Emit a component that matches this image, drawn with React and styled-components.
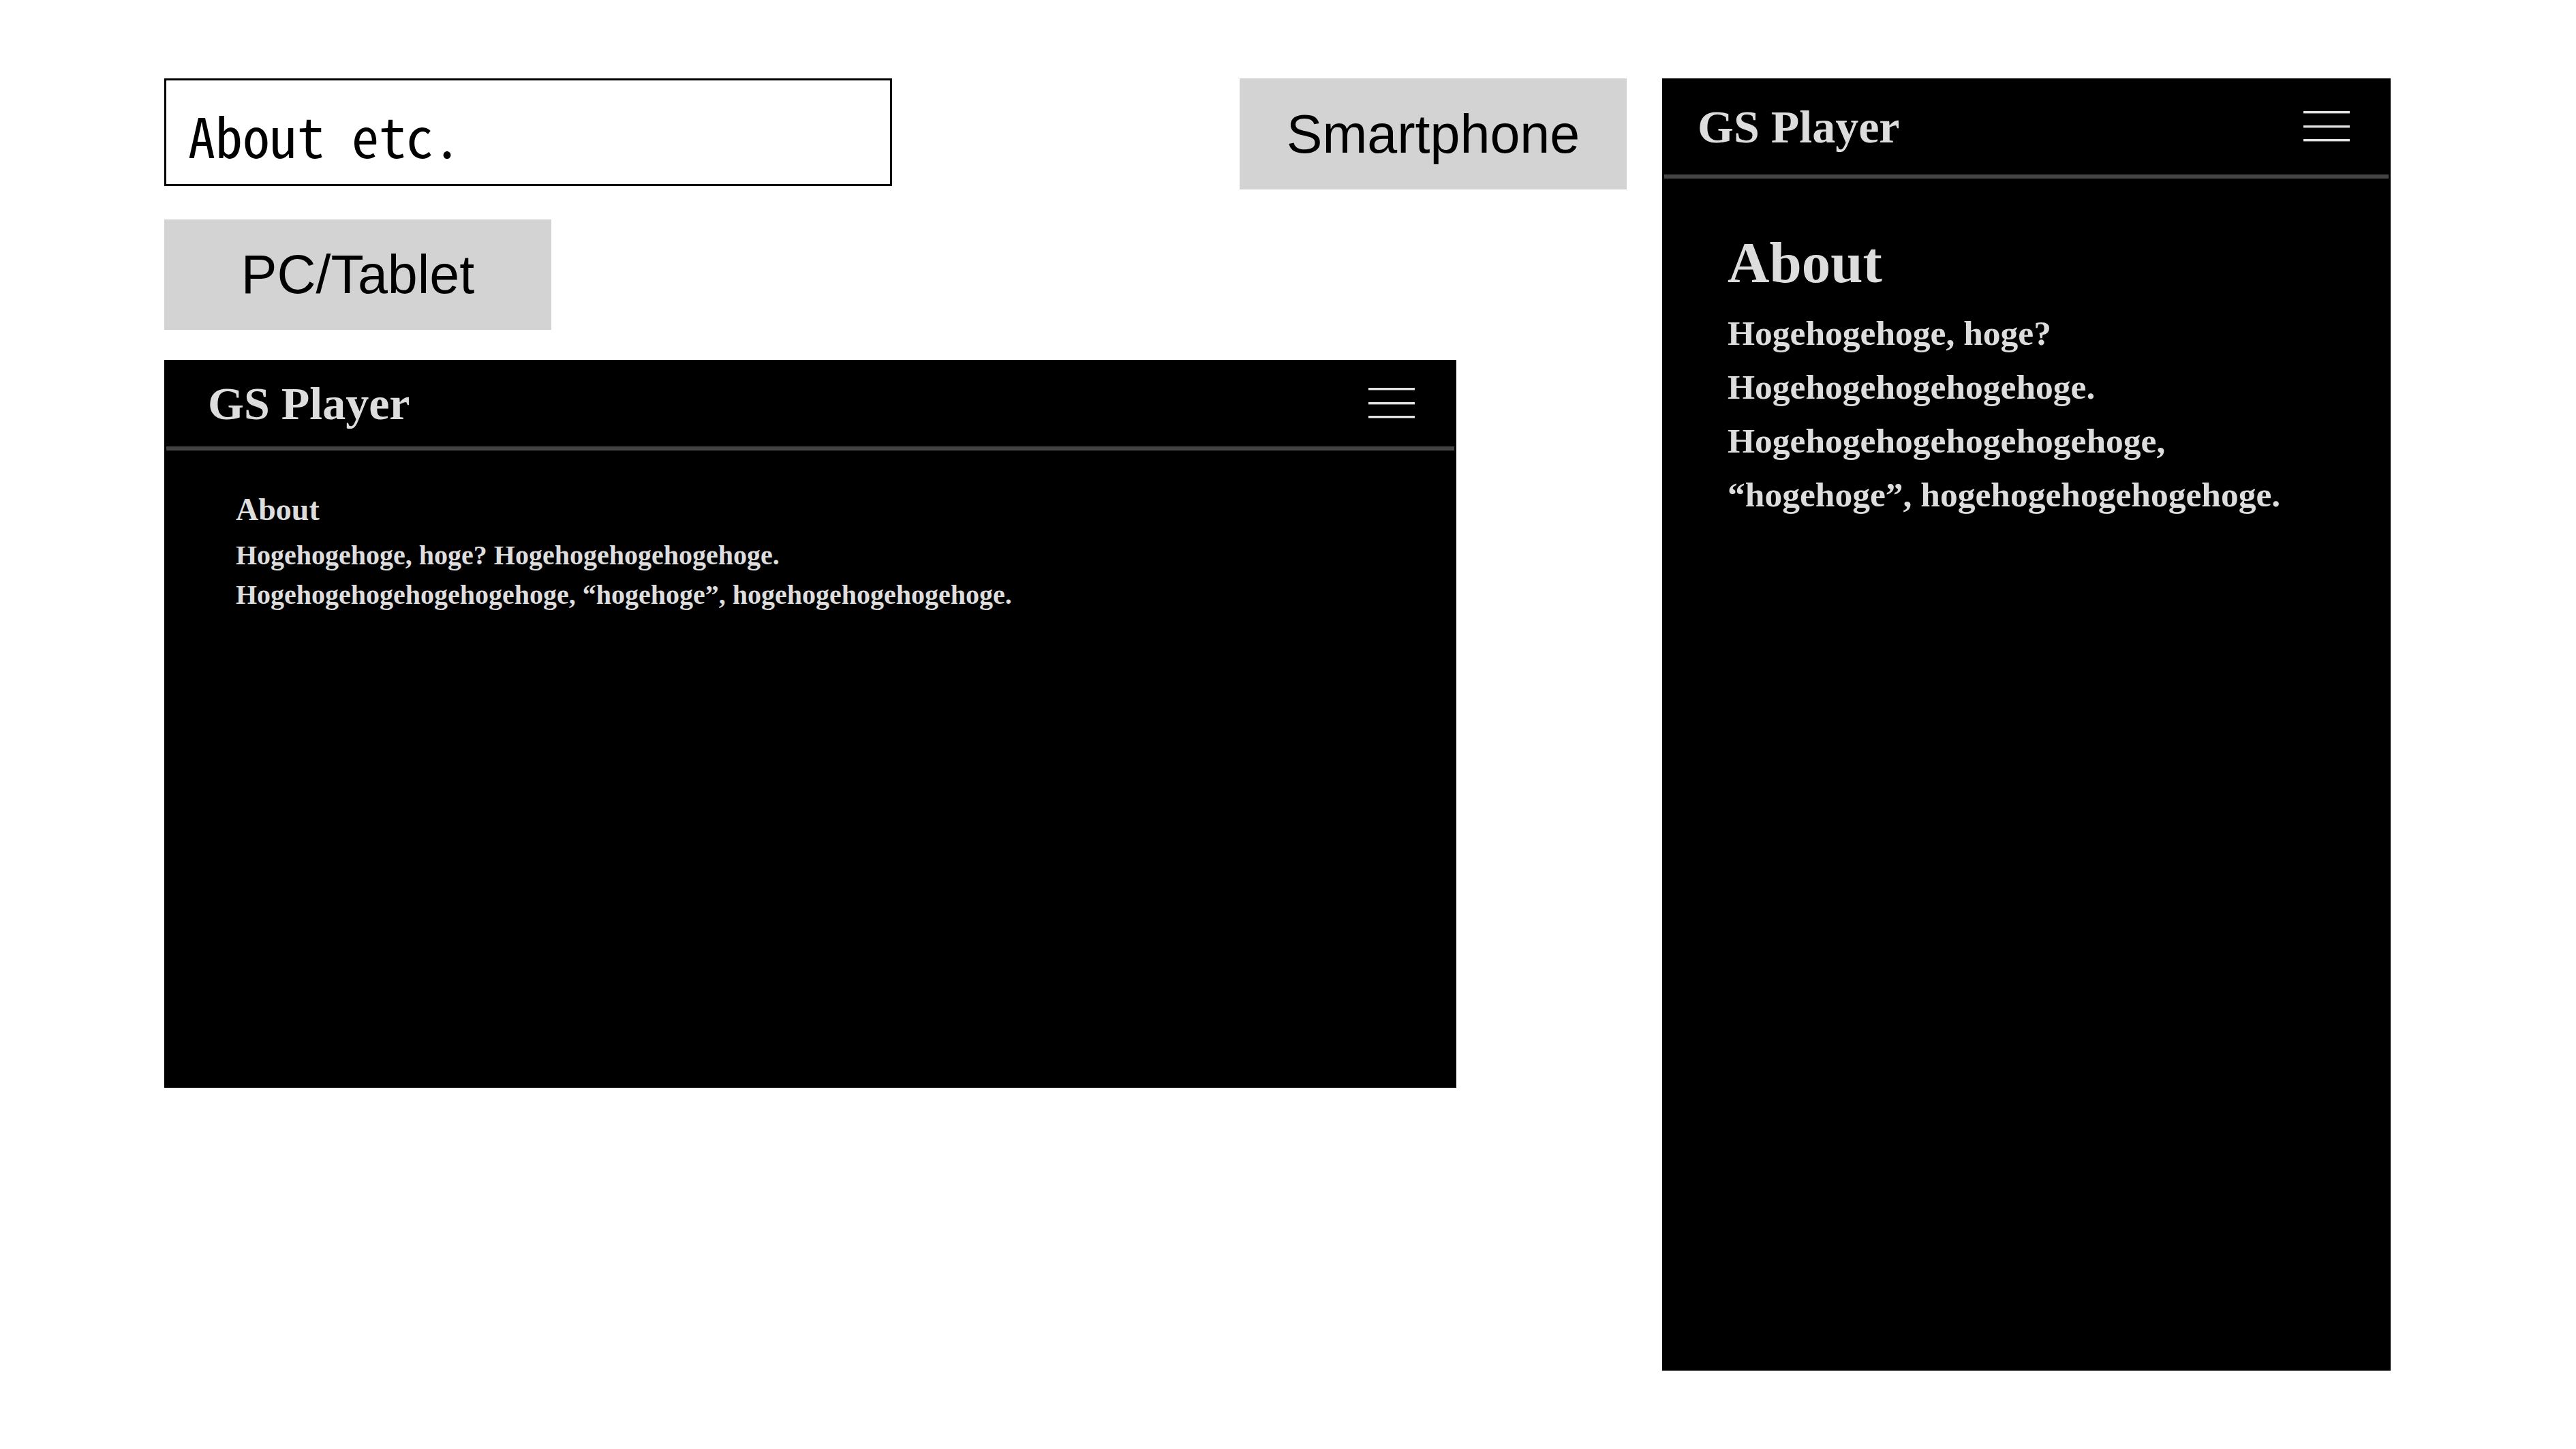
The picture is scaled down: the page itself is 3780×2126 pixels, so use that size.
import styled, { createGlobalStyle } from 'styled-components';

const GlobalStyle = createGlobalStyle`
  html, body {
    margin: 0;
    padding: 0;
    background: #ffffff;
  }
  body {
    font-family: "Liberation Sans", Arial, sans-serif;
  }
`;

// grid: left column (labels + PC mock), right column (phone mock)
const Page = styled.div`
  display: grid;
  grid-template-columns: 1578px 318px 302px 1069px;
  grid-template-rows: 163px 162px 1068px auto;
  row-gap: 44px;
  padding: 115px 0 80px 241px;
  align-items: start;
`;

const TitleBox = styled.div`
  grid-column: 1;
  grid-row: 1;
  box-sizing: border-box;
  width: 1068px;
  height: 158px;
  border: 3px solid #000;
  display: flex;
  align-items: center;
  padding: 6px 0 0 32px;
  font-family: "Noto Sans Mono CJK JP", "Liberation Mono", monospace;
  font-size: 80px;
  color: #000;
  white-space: pre;
`;

const DeviceLabel = styled.div`
  grid-column: ${p => p.$col};
  grid-row: ${p => p.$row};
  width: 568px;
  height: ${p => p.$h}px;
  background: lightgray;
  display: flex;
  align-items: center;
  justify-content: center;
  font-family: "Liberation Sans", Arial, sans-serif;
  font-size: 79px;
  color: #000;
`;

const Screen = styled.div`
  grid-column: ${p => p.$col};
  grid-row: ${p => p.$row};
  justify-self: ${p => p.$justify || 'start'};
  box-sizing: border-box;
  width: ${p => p.$w}px;
  height: ${p => p.$h}px;
  min-height: ${p => p.$h}px;
  background: #000;
  display: flex;
  flex-direction: column;
  font-family: "Liberation Serif", "Times New Roman", serif;
  font-weight: 700;
  color: #dddddd;
`;

const Header = styled.header`
  flex: none;
  margin: 0 3px;
  height: ${p => p.$h}px;
  border-bottom: 6px solid #444444;
  display: flex;
  align-items: center;
  justify-content: space-between;
  padding: 0 ${p => p.$right}px 0 ${p => p.$left}px;
`;

const Brand = styled.div`
  font-size: 68px;
  line-height: 1;
`;

const Burger = styled.svg`
  display: block;
  width: 68px;
  height: 45px;
`;

const Content = styled.main`
  padding: ${p => p.$top}px ${p => p.$side}px 0;
`;

const Heading = styled.h2`
  margin: 0 0 ${p => p.$gap}px;
  font-size: ${p => p.$size}px;
  line-height: 1.2;
  font-weight: 700;
`;

const Body = styled.p`
  margin: 0;
  font-size: ${p => p.$size}px;
  line-height: ${p => p.$lh}px;
`;

function MenuIcon() {
  return (
    <Burger viewBox="0 0 68 45">
      <rect x="0" y="0" width="68" height="3.4" fill="#e2e2e2" />
      <rect x="0" y="21" width="68" height="3.4" fill="#e2e2e2" />
      <rect x="0" y="41" width="68" height="3.4" fill="#e2e2e2" />
    </Burger>
  );
}

function AboutText() {
  return (
    <>
      Hogehogehoge, hoge? Hogehogehogehogehoge.
      <br />
      Hogehogehogehogehogehoge, “hogehoge”, hogehogehogehogehoge.
    </>
  );
}

export default function App() {
  return (
    <>
      <GlobalStyle />
      <Page>
        <TitleBox>About etc.</TitleBox>

        <DeviceLabel $col="2 / 4" $row="1" $h={163}>Smartphone</DeviceLabel>
        <DeviceLabel $col="1" $row="2" $h={162}>PC/Tablet</DeviceLabel>

        <Screen $col="1 / 3" $row="3" $w={1896} $h={1068}>
          <Header $h={127} $left={61} $right={58}>
            <Brand>GS Player</Brand>
            <MenuIcon />
          </Header>
          <Content $top={59} $side={105}>
            <Heading $size={46} $gap={11}>About</Heading>
            <Body $size={40} $lh={58}>
              <AboutText />
            </Body>
          </Content>
        </Screen>

        <Screen $col="4" $row="1 / 5" $justify="end" $w={1069} $h={1896}>
          <Header $h={141} $left={49} $right={57}>
            <Brand>GS Player</Brand>
            <MenuIcon />
          </Header>
          <Content $top={72} $side={96}>
            <Heading $size={85} $gap={13}>About</Heading>
            <Body $size={51.5} $lh={79}>
              <AboutText />
            </Body>
          </Content>
        </Screen>
      </Page>
    </>
  );
}
